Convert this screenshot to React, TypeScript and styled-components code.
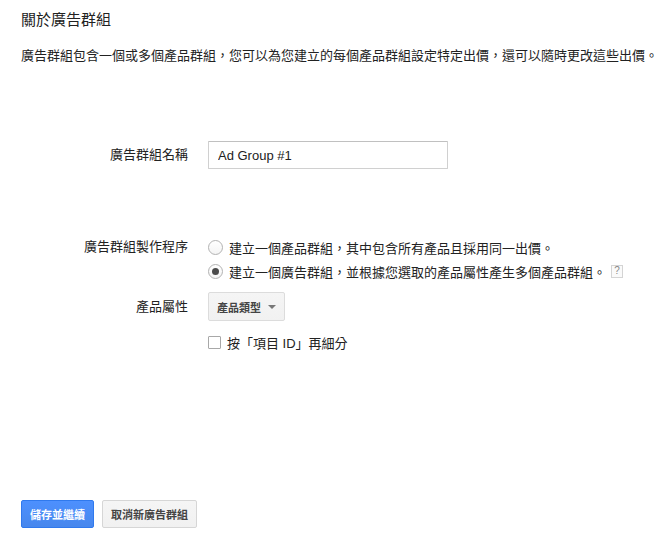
import React, { useState } from "react";
import styled, { createGlobalStyle } from "styled-components";

const GlobalStyle = createGlobalStyle`
  html, body {
    margin: 0;
    padding: 0;
    background: #fff;
  }
  body {
    font-family: "Liberation Sans", "Noto Sans CJK TC", Arial, sans-serif;
    color: #222;
  }
`;

const Page = styled.main`
  width: 670px;
  height: 550px;
  box-sizing: border-box;
  padding: 10px 21px 0;
  display: flex;
  flex-direction: column;
`;

const Title = styled.h1`
  margin: 0;
  font-size: 15px;
  line-height: 20px;
  font-weight: normal;
  color: #222;
`;

const Intro = styled.p`
  margin: 16px 0 0;
  font-size: 13px;
  line-height: 20px;
  color: #222;
  white-space: nowrap;
`;

const Form = styled.div`
  display: grid;
  grid-template-columns: 167px 1fr;
  column-gap: 20px;
  margin-top: 75px;
`;

const Label = styled.div<{ $top?: number; $height?: number }>`
  text-align: right;
  font-size: 13px;
  line-height: ${(p) => p.$height ?? 24}px;
  margin-top: ${(p) => p.$top ?? 0}px;
  color: #222;
`;

const Field = styled.div<{ $top?: number }>`
  margin-top: ${(p) => p.$top ?? 0}px;
  display: flex;
  flex-direction: column;
  align-items: flex-start;
`;

const TextInput = styled.input`
  box-sizing: border-box;
  width: 240px;
  height: 28px;
  padding: 0 9px;
  border: 1px solid #d0d0d0;
  border-top-color: #c0c0c0;
  border-radius: 1px;
  font-family: "Liberation Sans", "Noto Sans CJK TC", Arial, sans-serif;
  font-size: 13px;
  color: #222;
  outline: none;
`;

const Option = styled.label`
  display: flex;
  align-items: center;
  height: 24px;
  font-size: 13px;
  color: #222;
  cursor: pointer;
`;

const Radio = styled.span<{ $checked: boolean }>`
  box-sizing: border-box;
  width: 15px;
  height: 15px;
  border-radius: 50%;
  border: 1px solid #b2b2b2;
  background: linear-gradient(#fff, #f4f4f4);
  margin-right: 6px;
  display: flex;
  align-items: center;
  justify-content: center;
  &::after {
    content: "";
    width: 7px;
    height: 7px;
    border-radius: 50%;
    background: #4a4a4a;
    display: ${(p) => (p.$checked ? "block" : "none")};
  }
`;

const CheckBox = styled.span`
  box-sizing: border-box;
  width: 13px;
  height: 13px;
  border: 1px solid #a8a8a8;
  border-radius: 1px;
  background: #fff;
  margin-right: 6px;
`;

const Help = styled.span`
  box-sizing: border-box;
  display: inline-flex;
  align-items: center;
  justify-content: center;
  width: 12px;
  height: 13px;
  margin-left: 5px;
  border: 1px solid #d4d4d4;
  background: #fafafa;
  color: #888;
  font-size: 10px;
  line-height: 1;
`;

const Dropdown = styled.button`
  box-sizing: border-box;
  height: 29px;
  padding: 0 8px;
  display: flex;
  align-items: center;
  gap: 7px;
  border: 1px solid #dcdcdc;
  border-radius: 2px;
  background: linear-gradient(#f5f5f5, #f1f1f1);
  font-family: "Liberation Sans", "Noto Sans CJK TC", Arial, sans-serif;
  font-size: 11px;
  font-weight: bold;
  color: #444;
  cursor: pointer;
  &::after {
    content: "";
    border-left: 4px solid transparent;
    border-right: 4px solid transparent;
    border-top: 4px solid #777;
  }
`;

const Actions = styled.div`
  margin-top: auto;
  margin-bottom: 22px;
  display: flex;
  gap: 8px;
`;

const Button = styled.button<{ $primary?: boolean }>`
  box-sizing: border-box;
  height: 28px;
  padding: 0 8px;
  border-radius: 2px;
  font-family: "Liberation Sans", "Noto Sans CJK TC", Arial, sans-serif;
  font-size: 11px;
  font-weight: bold;
  cursor: pointer;
  border: 1px solid ${(p) => (p.$primary ? "#3079ed" : "#d6d6d6")};
  background: ${(p) =>
    p.$primary ? "linear-gradient(#4d90fe, #4787ed)" : "linear-gradient(#f5f5f5, #f1f1f1)"};
  color: ${(p) => (p.$primary ? "#fff" : "#444")};
`;

export default function App() {
  const [mode, setMode] = useState(1);
  const [name, setName] = useState("Ad Group #1");

  return (
    <Page>
      <GlobalStyle />
      <Title>關於廣告群組</Title>
      <Intro>
        廣告群組包含一個或多個產品群組，您可以為您建立的每個產品群組設定特定出價，還可以隨時更改這些出價。
      </Intro>
      <Form>
        <Label $height={28}>廣告群組名稱</Label>
        <Field>
          <TextInput value={name} onChange={(e) => setName(e.target.value)} />
        </Field>

        <Label $top={66}>廣告群組製作程序</Label>
        <Field $top={66}>
          <Option onClick={() => setMode(0)}>
            <Radio $checked={mode === 0} />
            建立一個產品群組，其中包含所有產品且採用同一出價。
          </Option>
          <Option onClick={() => setMode(1)}>
            <Radio $checked={mode === 1} />
            建立一個廣告群組，並根據您選取的產品屬性產生多個產品群組。
            <Help>?</Help>
          </Option>
        </Field>

        <Label $top={9} $height={29}>產品屬性</Label>
        <Field $top={9}>
          <Dropdown>產品類型</Dropdown>
        </Field>

        <div />
        <Field $top={9}>
          <Option>
            <CheckBox />
            按「項目 ID」再細分
          </Option>
        </Field>
      </Form>
      <Actions>
        <Button $primary>儲存並繼續</Button>
        <Button>取消新廣告群組</Button>
      </Actions>
    </Page>
  );
}
